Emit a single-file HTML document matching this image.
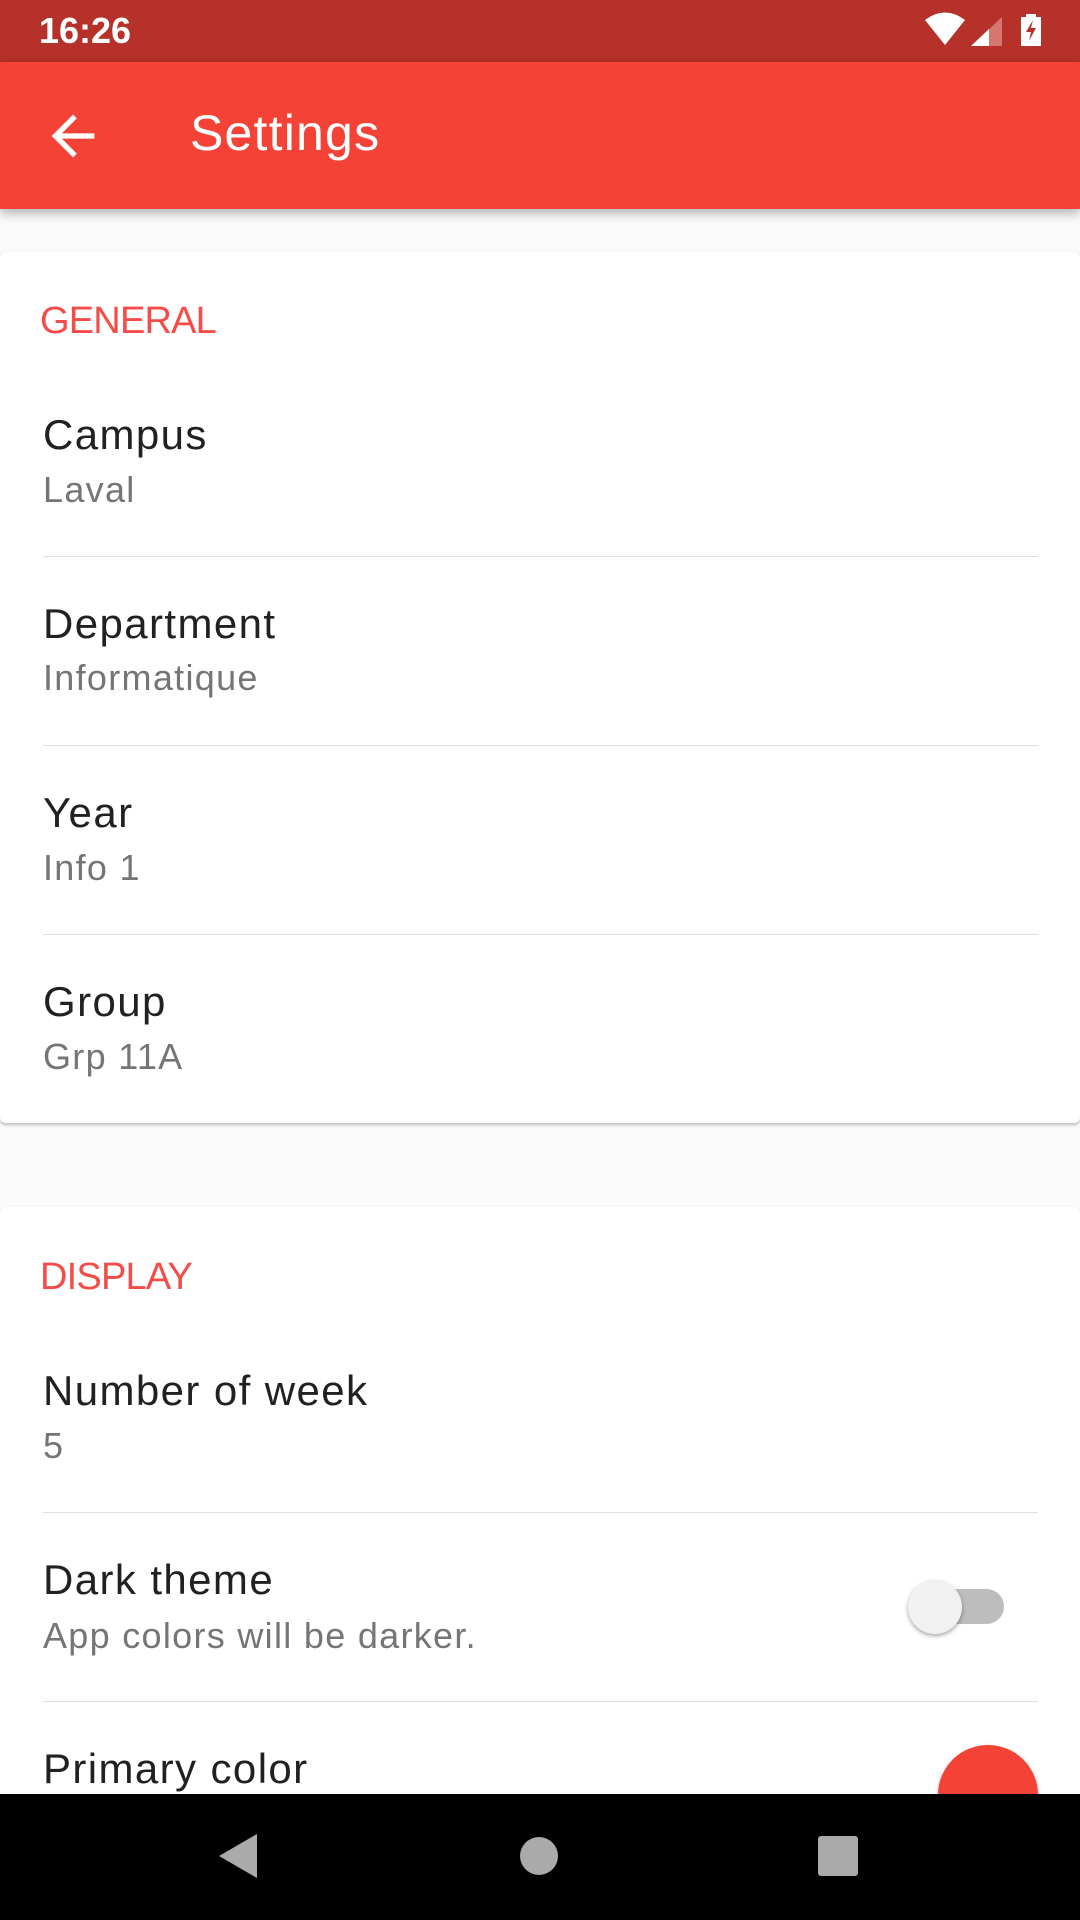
<!DOCTYPE html>
<html><head><meta charset="utf-8"><style>
*{margin:0;padding:0;box-sizing:border-box}
body{width:1080px;height:1920px;background:#FAFAFA;font-family:"Liberation Sans",sans-serif;position:relative;overflow:hidden}
.abs{position:absolute}
.sb{left:0;top:0;width:1080px;height:62px;background:#B7312B}
.tb{left:0;top:62px;width:1080px;height:147px;background:#F44336;box-shadow:0 4px 10px rgba(0,0,0,.3)}
.card{left:0;width:1080px;background:#fff;border-radius:6px;box-shadow:0 2px 3px rgba(0,0,0,.25)}
.h{color:#F44C49;font-size:38px;left:40px;letter-spacing:-0.8px}
.t{color:#212121;font-size:42px;left:43px;line-height:1;letter-spacing:1.4px}
.s{color:#757575;font-size:36px;left:43px;line-height:1;letter-spacing:1.3px}
.d{left:43px;width:995px;height:1px;background:#E0E0E0}
</style></head><body>
<div class="abs sb"></div>
<div class="abs" style="left:39px;top:10px;color:#fff;font-size:36px;font-weight:bold">16:26</div>
<svg class="abs" style="left:920px;top:10px" width="130" height="42" viewBox="920 10 130 42">
<path d="M925 20 Q945 5 965 20 L945 45 Z" fill="#fff"/>
<path d="M971 46 L1002 17 L1002 46 Z" fill="#D97570"/>
<path d="M971 46 L989 29 L989 46 Z" fill="#fff"/>
<path d="M1026 14h10v3h5v29h-20v-29h5z" fill="#fff"/>
<path d="M1033 20 L1026 32 L1031 32 L1029 41 L1036 28 L1031 28 Z" fill="#B7312B"/>
</svg>
<div class="abs tb"></div>
<svg class="abs" style="left:41px;top:104px" width="64" height="64" viewBox="0 0 24 24"><path d="M20 11H7.83l5.59-5.59L12 4l-8 8 8 8 1.41-1.41L7.83 13H20v-2z" fill="#fff"/></svg>
<div class="abs" style="left:190px;top:104px;color:#fff;font-size:50px;letter-spacing:1.2px">Settings</div>

<div class="abs card" style="top:252px;height:871px"></div>
<div class="abs h" style="top:300px">GENERAL</div>
<div class="abs t" style="top:414px">Campus</div>
<div class="abs s" style="top:472px">Laval</div>
<div class="abs d" style="top:556px"></div>
<div class="abs t" style="top:603px">Department</div>
<div class="abs s" style="top:660px">Informatique</div>
<div class="abs d" style="top:745px"></div>
<div class="abs t" style="top:792px">Year</div>
<div class="abs s" style="top:850px">Info 1</div>
<div class="abs d" style="top:934px"></div>
<div class="abs t" style="top:981px">Group</div>
<div class="abs s" style="top:1039px">Grp 11A</div>

<div class="abs card" style="top:1207px;height:700px"></div>
<div class="abs h" style="top:1256px">DISPLAY</div>
<div class="abs t" style="top:1370px">Number of week</div>
<div class="abs s" style="top:1428px">5</div>
<div class="abs d" style="top:1512px"></div>
<div class="abs t" style="top:1559px">Dark theme</div>
<div class="abs s" style="top:1618px">App colors will be darker.</div>
<div class="abs" style="left:937px;top:1589px;width:67px;height:35px;border-radius:18px;background:#BDBDBD"></div>
<div class="abs" style="left:908px;top:1580px;width:54px;height:54px;border-radius:50%;background:#F1F1F1;box-shadow:0 2px 4px rgba(0,0,0,.35)"></div>
<div class="abs d" style="top:1701px"></div>
<div class="abs t" style="top:1748px">Primary color</div>
<div class="abs" style="left:938px;top:1745px;width:100px;height:100px;border-radius:50%;background:#F44336;box-shadow:0 2px 4px rgba(0,0,0,.3)"></div>

<div class="abs" style="left:0;top:1794px;width:1080px;height:126px;background:#000"></div>
<svg class="abs" style="left:0;top:1794px" width="1080" height="126">
<path d="M257 40 L257 84 L219 62 Z" fill="#aaa"/>
<circle cx="539" cy="62" r="19" fill="#aaa"/>
<rect x="818" y="42" width="40" height="40" rx="3" fill="#aaa"/>
</svg>
</body></html>
